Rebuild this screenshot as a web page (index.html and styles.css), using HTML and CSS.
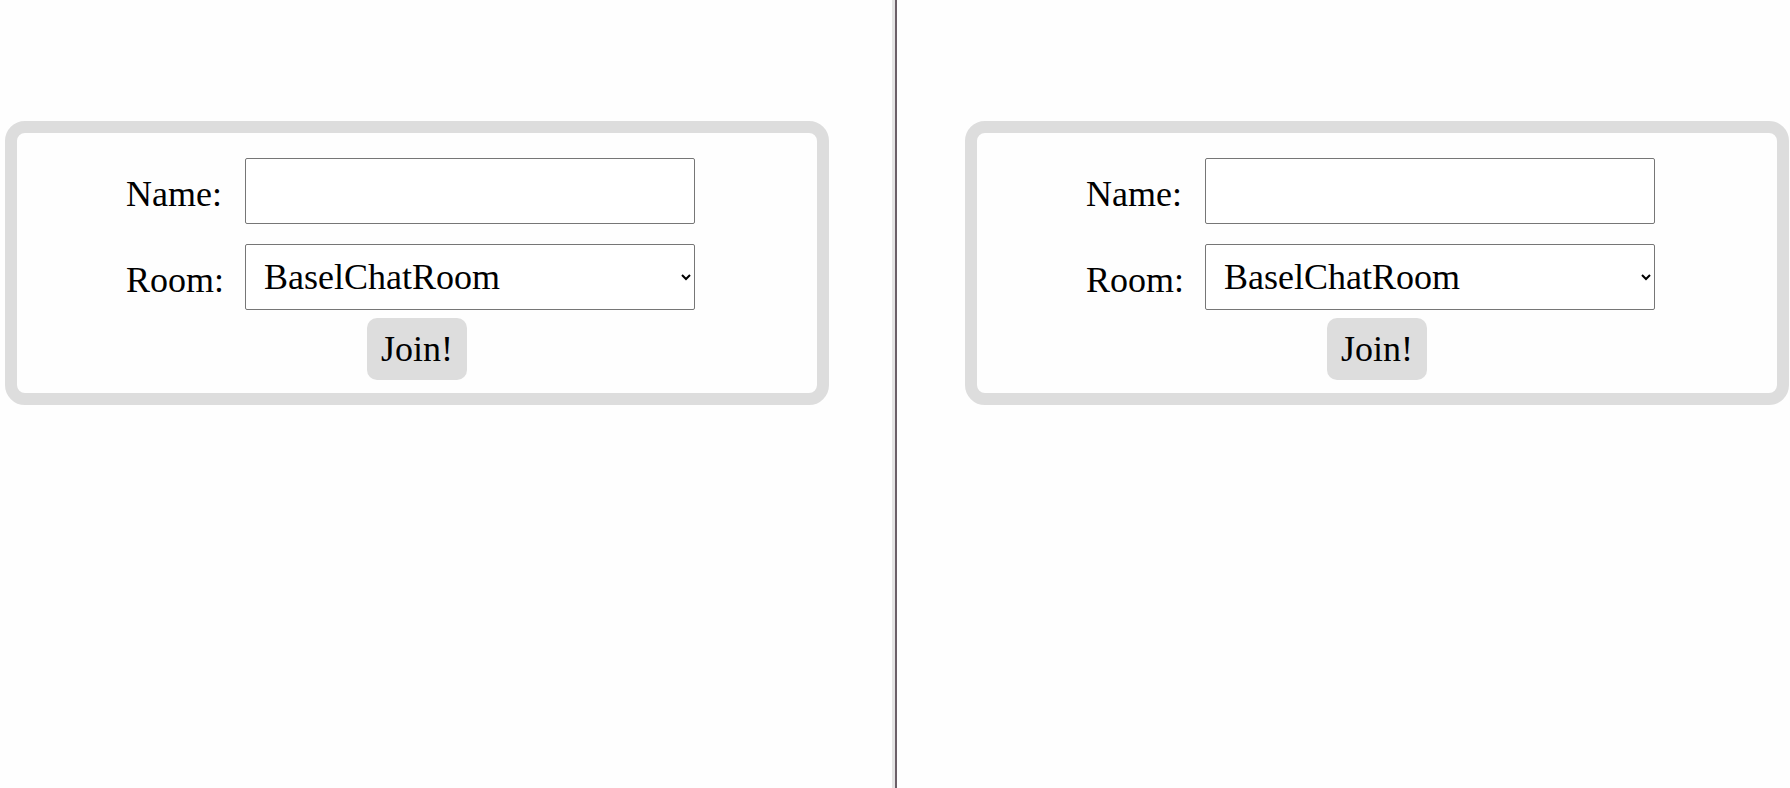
FILE: index.html
```html
<!DOCTYPE html>
<html lang="en">
<head>
<meta charset="utf-8">
<title>Chat Join</title>
<link rel="stylesheet" href="styles.css">
</head>
<body>
<div class="split">
  <div class="pane pane-left">
    <div class="card">
      <div class="fields">
        <label class="label" for="name1">Name:</label>
        <input class="field" id="name1" type="text">
        <label class="label" for="room1">Room:</label>
        <select class="field select" id="room1">
          <option>BaselChatRoom</option>
        </select>
      </div>
      <button class="join" type="button">Join!</button>
    </div>
  </div>
  <div class="divider"></div>
  <div class="pane pane-right">
    <div class="card">
      <div class="fields">
        <label class="label" for="name2">Name:</label>
        <input class="field" id="name2" type="text">
        <label class="label" for="room2">Room:</label>
        <select class="field select" id="room2">
          <option>BaselChatRoom</option>
        </select>
      </div>
      <button class="join" type="button">Join!</button>
    </div>
  </div>
</div>
</body>
</html>
```
FILE: styles.css
```css
html, body {
  margin: 0;
  padding: 0;
  background: #fefefe;
}

body {
  font-family: "Liberation Serif", "Times New Roman", serif;
  font-size: 36px;
  color: #000;
  width: 1790px;
  height: 788px;
  overflow: hidden;
}

.split {
  display: flex;
  height: 788px;
}

.pane {
  display: flex;
  align-items: flex-start;
}

.pane-left {
  width: 892px;
  padding-left: 5px;
  box-sizing: border-box;
}

.pane-right {
  flex: 1;
  padding-left: 68px;
}

.divider {
  width: 3px;
  background: #e4e4e4;
  border-right: 2px solid #6b5f67;
}

.card {
  margin-top: 121px;
  width: 824px;
  box-sizing: border-box;
  border: 12px solid #dddddd;
  border-radius: 20px;
  background: #fefefe;
  padding: 25px 0 13px 0;
  display: flex;
  flex-direction: column;
}

.fields {
  display: grid;
  grid-template-columns: 96px 450px;
  column-gap: 23px;
  row-gap: 20px;
  align-items: center;
  margin-left: 109px;
}

.label {
  font-size: 36px;
  line-height: 1;
  padding-top: 5px;
  white-space: nowrap;
}

.field {
  box-sizing: border-box;
  width: 450px;
  height: 66px;
  border: 1px solid #767676;
  border-radius: 2px;
  background: #fff;
  font-family: "Liberation Serif", "Times New Roman", serif;
  font-size: 36px;
  color: #000;
  padding: 0 16px;
  margin: 0;
}

.select {
  padding: 0 6px 0 14px;
}

.join {
  align-self: center;
  margin-top: 8px;
  height: 62px;
  padding: 0 14px;
  border: none;
  border-radius: 10px;
  background: #dddddd;
  font-family: "Liberation Serif", "Times New Roman", serif;
  font-size: 36px;
  color: #000;
}
```
